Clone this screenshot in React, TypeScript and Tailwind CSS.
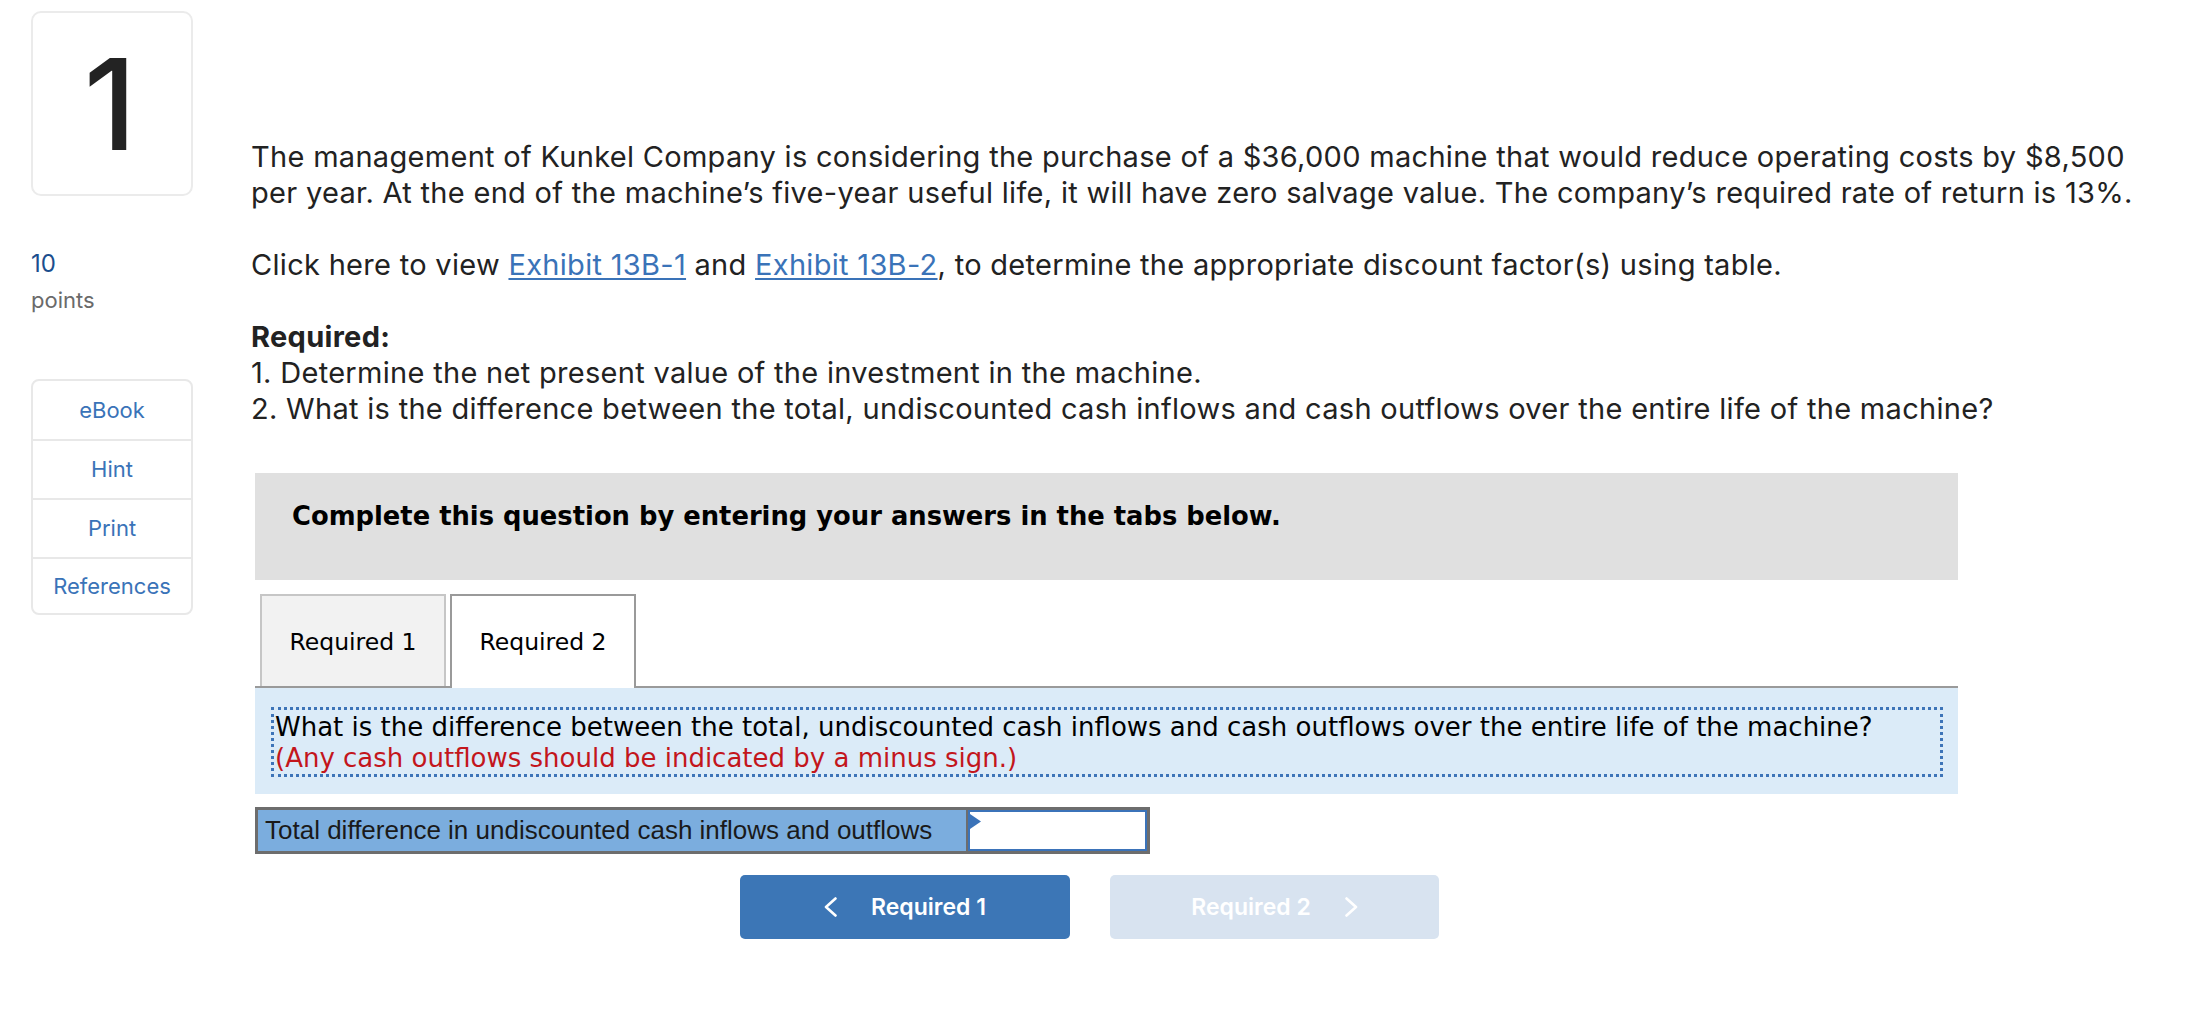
import React from "react";

function ChevronLeftIcon() {
  return (
    <svg width="13" height="20" viewBox="0 0 13 20" fill="none" className="shrink-0">
      <polyline points="11.5,1.5 2,10 11.5,18.5" stroke="white" strokeWidth="2.6" strokeLinecap="round" strokeLinejoin="round" />
    </svg>
  );
}

function ChevronRightIcon() {
  return (
    <svg width="13" height="20" viewBox="0 0 13 20" fill="none" className="shrink-0">
      <polyline points="1.5,1.5 11,10 1.5,18.5" stroke="white" strokeWidth="2.6" strokeLinecap="round" strokeLinejoin="round" />
    </svg>
  );
}

export default function App() {
  return (
    <div className="min-h-screen w-full overflow-hidden bg-white text-[#222] flex font-['Inter',sans-serif]">
      {/* Left column */}
      <div className="ml-[31px] w-[162px] shrink-0 pt-[11px] flex flex-col">
        <div className="h-[185px] w-[162px] rounded-[10px] border-2 border-[#ebebeb] flex items-center justify-center">
          <span className="text-[127px] leading-none text-[#232323] font-medium mt-[2px] -ml-[4px]">1</span>
        </div>
        <div className="mt-[52px] text-[24px] leading-[32px] text-[#1b4e8e]">10</div>
        <div className="mt-[6px] text-[22px] leading-[28px] text-[#6a6a6a]">points</div>
        <div className="mt-[65px] rounded-[8px] border-2 border-[#e8e8e8] flex flex-col text-[22px] text-[#3a73b8]">
          <div className="h-[58px] flex items-center justify-center">eBook</div>
          <div className="h-[59px] flex items-center justify-center border-t-2 border-[#e8e8e8]">Hint</div>
          <div className="h-[59px] flex items-center justify-center border-t-2 border-[#e8e8e8]">Print</div>
          <div className="h-[56px] flex items-center justify-center border-t-2 border-[#e8e8e8]">References</div>
        </div>
      </div>

      {/* Main column */}
      <div className="ml-[58px] shrink-0 pt-[139px]">
        <div className="text-[29px] leading-[36px] tracking-[0.3px] text-[#222] whitespace-nowrap">
          <p>
            The management of Kunkel Company is considering the purchase of a $36,000 machine that would reduce operating costs by $8,500
            <br />
            per year. At the end of the machine’s five-year useful life, it will have zero salvage value. The company’s required rate of return is 13%.
          </p>
          <p className="mt-[36px]">
            Click here to view <span className="text-[#3a73b8] underline underline-offset-[3px]">Exhibit 13B-1</span> and{" "}
            <span className="text-[#3a73b8] underline underline-offset-[3px]">Exhibit 13B-2</span>, to determine the appropriate discount factor(s) using table.
          </p>
          <div className="mt-[36px]">
            <p className="font-bold">Required:</p>
            <p>1. Determine the net present value of the investment in the machine.</p>
            <p>2. What is the difference between the total, undiscounted cash inflows and cash outflows over the entire life of the machine?</p>
          </div>
        </div>

        <div className="ml-[4px] mt-[46px] w-[1703px]">
          {/* Instruction box */}
          <div className="h-[107px] bg-[#e0e0e0] pl-[37px] pt-[27px]">
            <p className="font-['DejaVu_Sans',sans-serif] font-bold text-[25.8px] leading-[32px] text-black">
              Complete this question by entering your answers in the tabs below.
            </p>
          </div>

          {/* Tabs */}
          <div className="mt-[14px] flex items-end gap-[4px] pl-[5px] border-b-2 border-[#9a9a9a] font-['DejaVu_Sans',sans-serif] text-[23.5px] text-black">
            <div className="w-[186px] h-[92px] bg-[#f2f2f2] border-2 border-b-0 border-[#c6c6c6] flex items-center justify-center pt-[3px]">
              Required 1
            </div>
            <div className="w-[186px] h-[94px] -mb-[2px] bg-white border-2 border-b-0 border-[#9a9a9a] flex items-center justify-center pt-[1px]">
              Required 2
            </div>
          </div>

          {/* Question panel */}
          <div className="bg-[#dbebf8] pt-[19px] pb-[17px] pl-[16px] pr-[15px]">
            <div className="border-[3px] border-dotted border-[#3d74b8] pt-[2px] pl-[1px] font-['DejaVu_Sans',sans-serif] text-[26px] leading-[31px] whitespace-nowrap">
              <p className="text-black">
                What is the difference between the total, undiscounted cash inflows and cash outflows over the entire life of the machine?
              </p>
              <p className="text-[#c3161c]">(Any cash outflows should be indicated by a minus sign.)</p>
            </div>
          </div>

          {/* Answer row */}
          <div className="mt-[13px] w-[895px] h-[47px] border-[3px] border-[#6d6d6d] flex">
            <div className="w-[710px] bg-[#7badde] flex items-center pl-[7px] font-['Liberation_Sans',sans-serif] text-[26px] text-[#1a1a1a] whitespace-nowrap border-r-2 border-[#6d6d6d]">
              Total difference in undiscounted cash inflows and outflows
            </div>
            <div className="relative flex-1 bg-white border-2 border-[#3b73b9]">
              <svg width="12" height="16" viewBox="0 0 12 16" className="absolute left-0 top-[2px]">
                <polygon points="0,0 11,7.5 0,15" fill="#3b73b9" />
              </svg>
            </div>
          </div>

          {/* Navigation buttons */}
          <div className="mt-[21px] ml-[485px] flex gap-[40px]">
            <button className="w-[330px] h-[64px] rounded-[5px] bg-[#3c76b6] flex items-center justify-center gap-[34px] text-white text-[23px] font-semibold">
              <ChevronLeftIcon />
              <span>Required 1</span>
            </button>
            <button className="w-[329px] h-[64px] rounded-[5px] bg-[#d8e3f0] flex items-center justify-center gap-[34px] text-white text-[23px] font-semibold">
              <span>Required 2</span>
              <ChevronRightIcon />
            </button>
          </div>
        </div>
      </div>
    </div>
  );
}
